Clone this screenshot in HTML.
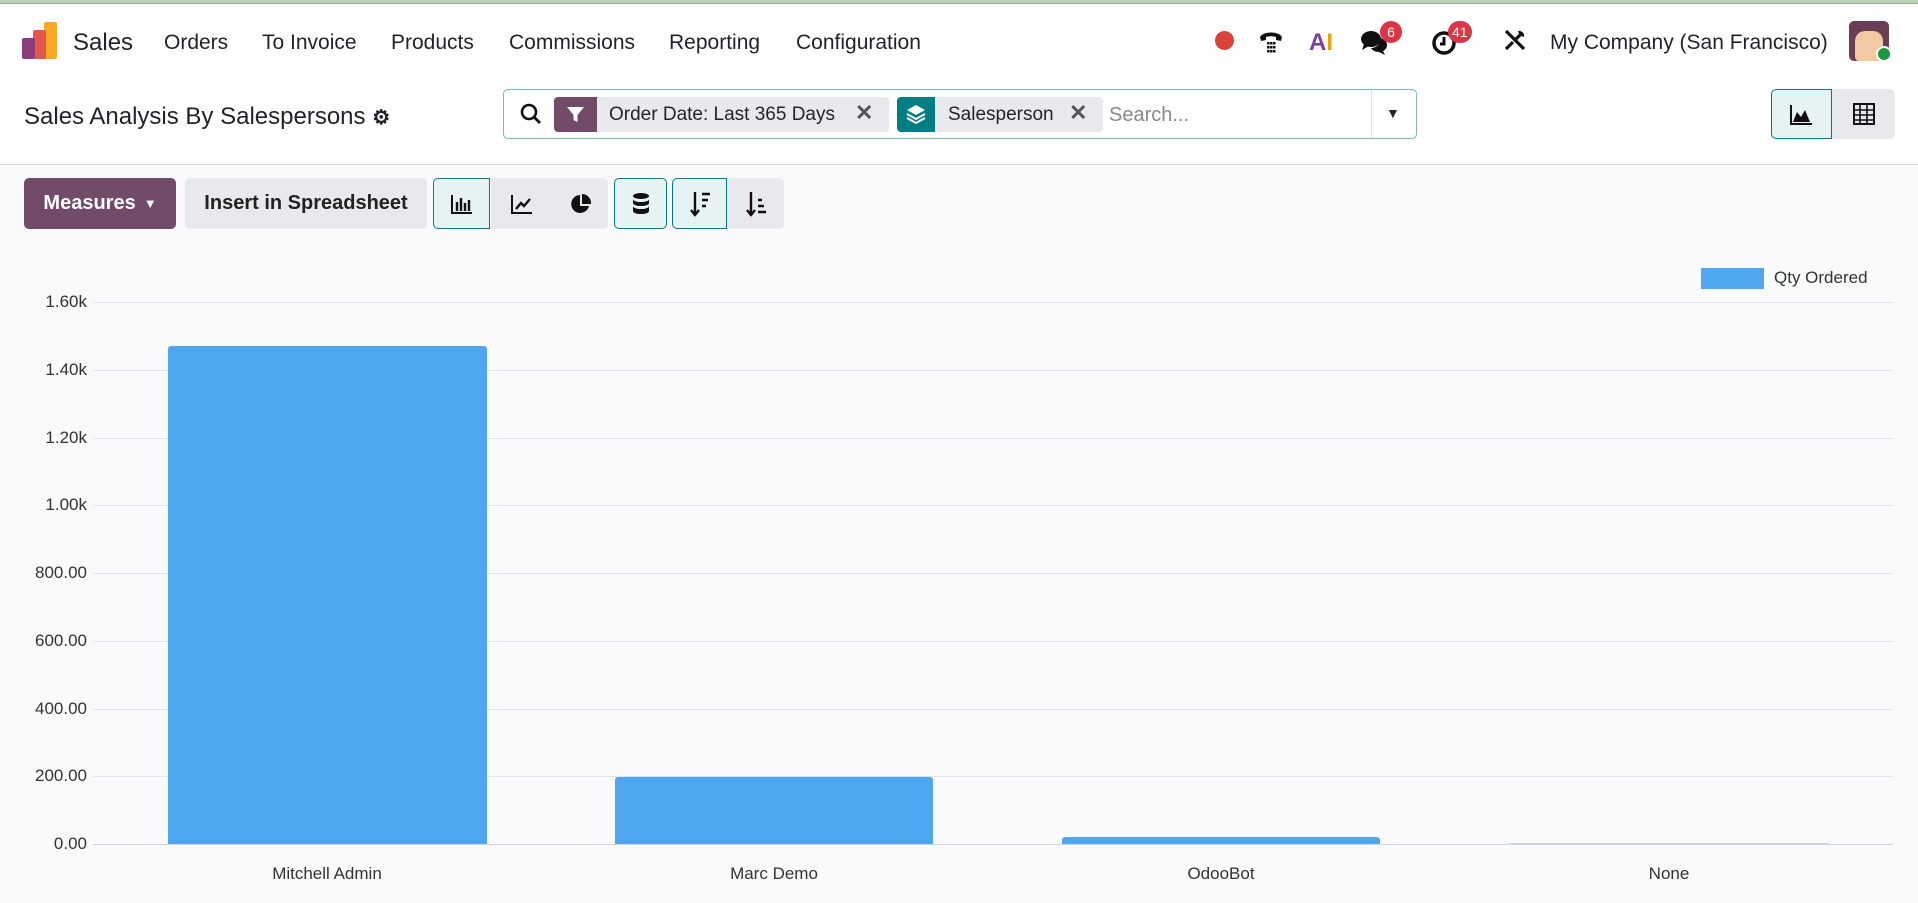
<!DOCTYPE html>
<html><head><meta charset="utf-8"><style>
*{box-sizing:border-box;margin:0;padding:0}
body{width:1918px;height:903px;overflow:hidden;font-family:"Liberation Sans",sans-serif;color:#212529;background:#f9fafb;position:relative}
.a{position:absolute}
.top{left:0;top:0;width:1918px;height:165px;background:#fff;border-bottom:1px solid #d8dadd}
.gl{left:0;top:0;width:1918px;height:4px;background:#b9d3b9;border-bottom:1px solid #8fa88f}
.nav{top:31px;font-size:21px;color:#1f2328}
.btn{background:#e7e9ed;border-radius:5px;height:51px;top:178px;display:flex;align-items:center;justify-content:center}
.act{background:#e6f2f3;border:1px solid #017e84}
.grid{left:93px;width:1800px;height:1px;background:#e1e3e6}
.yl{left:20px;width:67px;text-align:right;font-size:17px;color:#333}
.xl{font-size:17px;color:#333;text-align:center;width:300px;top:864px}
.bar{background:#4fa7f2;border-top-left-radius:3px;border-top-right-radius:3px}
.badge{background:#dc3545;color:#fff;font-size:14px;border-radius:11px;height:22px;min-width:22px;text-align:center;line-height:22px;padding:0 4px;top:21px}
</style></head><body>
<div class="a top"></div>
<div class="a gl"></div>
<svg class="a" style="left:22px;top:22px" width="36" height="38" viewBox="0 0 36 38"><rect x="22" y="0" width="13" height="37" fill="#f9a825" rx="2"/><rect x="11" y="8" width="13" height="29" fill="#e4574f" rx="2"/><rect x="0" y="16" width="13" height="21" fill="#8c3d7a" rx="2"/></svg>
<div class="a nav" style="left:73px;top:29px;font-size:24px">Sales</div>
<div class="a nav" style="left:164px">Orders</div>
<div class="a nav" style="left:262px">To Invoice</div>
<div class="a nav" style="left:391px">Products</div>
<div class="a nav" style="left:509px">Commissions</div>
<div class="a nav" style="left:669px">Reporting</div>
<div class="a nav" style="left:796px">Configuration</div>
<div class="a" style="left:1215px;top:31px;width:19px;height:19px;border-radius:50%;background:#d9443a"></div>
<svg class="a" style="left:1258px;top:28px" width="26" height="26" viewBox="0 0 26 26"><path d="M2 9c3-6 19-6 22 0l-1 4-5-1v-3c-3-1-7-1-10 0v3l-5 1z" fill="#111"/><g fill="#111"><rect x="9" y="14" width="2.5" height="2.5"/><rect x="12" y="14" width="2.5" height="2.5"/><rect x="15" y="14" width="2.5" height="2.5"/><rect x="9" y="18" width="2.5" height="2.5"/><rect x="12" y="18" width="2.5" height="2.5"/><rect x="15" y="18" width="2.5" height="2.5"/><rect x="9" y="22" width="2.5" height="2.5"/><rect x="12" y="22" width="2.5" height="2.5"/><rect x="15" y="22" width="2.5" height="2.5"/></g></svg>
<div class="a" style="left:1309px;top:29px;font-size:24px;font-weight:bold;color:#7b3fa0">A<span style="color:#f0a000">I</span></div>
<svg class="a" style="left:1360px;top:29px" width="28" height="26" viewBox="0 0 28 26"><ellipse cx="11" cy="10" rx="10" ry="8" fill="#111"/><path d="M4 15l-2 6 7-4z" fill="#111"/><path d="M20 9c5 1 7 4 7 7s-2 5-4 6l2 4-6-3c-4 0-7-2-8-4 5 0 10-4 9-10z" fill="#111"/></svg>
<div class="a badge" style="left:1380px">6</div>
<svg class="a" style="left:1431px;top:30px" width="26" height="26" viewBox="0 0 26 26"><circle cx="13" cy="13" r="10" stroke="#111" stroke-width="3.5" fill="none"/><path d="M13 7v7h-4" stroke="#111" stroke-width="3" fill="none"/></svg>
<div class="a badge" style="left:1448px">41</div>
<svg class="a" style="left:1503px;top:28px" width="24" height="24" viewBox="0 0 24 24"><path d="M3 3l18 18M3 21l7-7" stroke="#111" stroke-width="3.2"/><path d="M15 3a5 5 0 0 1 6 6l-3-1-2-2z" fill="#111"/><path d="M13 11l4-4" stroke="#111" stroke-width="3.2"/></svg>
<div class="a nav" style="left:1550px">My Company (San Francisco)</div>
<div class="a" style="left:1849px;top:21px;width:40px;height:40px;border-radius:5px;background:#6a3e55;overflow:hidden"><div style="margin:10px 6px;width:28px;height:30px;background:#f2c9a0;border-radius:10px 10px 4px 4px"></div></div>
<div class="a" style="left:1876px;top:46px;width:16px;height:16px;border-radius:50%;background:#1a9a3a;border:2px solid #fff"></div>
<div class="a" style="left:24px;top:103px;font-size:24px;color:#1f2328">Sales Analysis By Salespersons <span style="font-size:20px;font-weight:bold">⚙</span></div>
<div class="a" style="left:503px;top:89px;width:914px;height:50px;border:1px solid #7fb6b9;border-radius:5px;background:#fff"></div>
<svg class="a" style="left:519px;top:102px" width="24" height="24" viewBox="0 0 24 24"><circle cx="10" cy="10" r="7" stroke="#111" stroke-width="2.6" fill="none"/><line x1="15" y1="15" x2="21" y2="21" stroke="#111" stroke-width="2.8"/></svg>
<div class="a" style="left:554px;top:97px;width:335px;height:35px;background:#e7e9ed;border-radius:4px"></div>
<div class="a" style="left:554px;top:97px;width:43px;height:35px;background:#714b67;border-radius:4px 0 0 4px"></div>
<svg class="a" style="left:566px;top:105px" width="19" height="19" viewBox="0 0 19 19"><path d="M1 2h17l-6.5 8v7l-4-2v-5z" fill="#fff"/></svg>
<div class="a" style="left:609px;top:104px;font-size:19px">Order Date: Last 365 Days</div>
<div class="a" style="left:855px;top:100px;font-size:22px;color:#555;font-weight:bold">✕</div>
<div class="a" style="left:897px;top:97px;width:206px;height:35px;background:#e7e9ed;border-radius:4px"></div>
<div class="a" style="left:897px;top:97px;width:38px;height:35px;background:#017e84;border-radius:4px 0 0 4px"></div>
<svg class="a" style="left:905px;top:103px" width="22" height="22" viewBox="0 0 22 22"><path d="M11 2l9 5-9 5-9-5z" fill="#fff"/><path d="M2 11l9 5 9-5M2 15l9 5 9-5" stroke="#fff" stroke-width="2" fill="none"/></svg>
<div class="a" style="left:948px;top:104px;font-size:19px">Salesperson</div>
<div class="a" style="left:1069px;top:100px;font-size:22px;color:#555;font-weight:bold">✕</div>
<div class="a" style="left:1109px;top:104px;font-size:20px;color:#888">Search...</div>
<div class="a" style="left:1371px;top:90px;width:1px;height:48px;background:#dee2e6"></div>
<div class="a" style="left:1386px;top:105px;font-size:14px">▼</div>
<div class="a act" style="left:1771px;top:89px;width:61px;height:50px;border-radius:5px 0 0 5px"></div>
<svg class="a" style="left:1789px;top:104px" width="24" height="22" viewBox="0 0 24 22"><path d="M2 1v19h21" stroke="#111" stroke-width="2" fill="none"/><path d="M4 18l4-10 4 5 4-7 5 12z" fill="#111"/></svg>
<div class="a" style="left:1832px;top:89px;width:63px;height:50px;background:#e7e9ed;border-radius:0 5px 5px 0"></div>
<svg class="a" style="left:1853px;top:103px" width="22" height="22" viewBox="0 0 22 22"><rect x="1" y="1" width="20" height="20" stroke="#111" stroke-width="2" fill="none"/><path d="M1 7h20M1 12h20M1 17h20M7 1v20M14 1v20" stroke="#111" stroke-width="1.6"/></svg>
<div class="a btn" style="left:24px;width:152px;background:#714b67;color:#fff;font-size:20px;font-weight:bold">Measures <span style="font-size:13px;margin-left:8px">▼</span></div>
<div class="a btn" style="left:185px;width:242px;font-size:20px;font-weight:bold;color:#222">Insert in Spreadsheet</div>
<div class="a btn act" style="left:433px;width:57px;border-radius:5px 0 0 5px"><svg width="22" height="20" viewBox="0 0 22 20"><path d="M1 1v18h20" stroke="#111" stroke-width="2" fill="none"/><path d="M6 8v9M10 4v13M14 9v8M18 6v11" stroke="#111" stroke-width="2.4"/></svg></div>
<div class="a btn" style="left:491px;width:62px;border-radius:0"><svg width="22" height="20" viewBox="0 0 22 20"><path d="M1 1v18h20" stroke="#111" stroke-width="2" fill="none"/><path d="M5 15l5-6 3 3 6-7" stroke="#111" stroke-width="2.4" fill="none"/></svg></div>
<div class="a btn" style="left:553px;width:55px;border-radius:0 5px 5px 0"><svg width="22" height="22" viewBox="0 0 22 22"><path d="M10 2a9 9 0 1 0 9 11h-9z" fill="#111"/><path d="M12 1v10h9a9 9 0 0 0-9-10z" fill="#111"/></svg></div>
<div class="a btn act" style="left:614px;width:53px"><svg width="20" height="24" viewBox="0 0 20 24"><ellipse cx="10" cy="4" rx="8" ry="3" fill="#111"/><path d="M2 7c0 4 16 4 16 0v4c0 4-16 4-16 0zM2 14c0 4 16 4 16 0v5c0 4-16 4-16 0z" fill="#111"/></svg></div>
<div class="a btn act" style="left:672px;width:55px;border-radius:5px 0 0 5px"><svg width="22" height="26" viewBox="0 0 22 26"><path d="M6 1v22M2 19l4 5 4-5" stroke="#111" stroke-width="2.4" fill="none"/><path d="M13 3h8M13 9h6M13 15h4" stroke="#111" stroke-width="2.4"/></svg></div>
<div class="a btn" style="left:727px;width:57px;border-radius:0 5px 5px 0"><svg width="22" height="26" viewBox="0 0 22 26"><path d="M6 1v22M2 19l4 5 4-5" stroke="#111" stroke-width="2.4" fill="none"/><path d="M13 9h4M13 15h6M13 21h8" stroke="#111" stroke-width="2.4"/></svg></div>
<div class="a grid" style="top:302px"></div><div class="a yl" style="top:292px">1.60k</div>
<div class="a grid" style="top:370px"></div><div class="a yl" style="top:360px">1.40k</div>
<div class="a grid" style="top:438px"></div><div class="a yl" style="top:428px">1.20k</div>
<div class="a grid" style="top:505px"></div><div class="a yl" style="top:495px">1.00k</div>
<div class="a grid" style="top:573px"></div><div class="a yl" style="top:563px">800.00</div>
<div class="a grid" style="top:641px"></div><div class="a yl" style="top:631px">600.00</div>
<div class="a grid" style="top:709px"></div><div class="a yl" style="top:699px">400.00</div>
<div class="a grid" style="top:776px"></div><div class="a yl" style="top:766px">200.00</div>
<div class="a grid" style="top:844px;background:#cfd2d6"></div><div class="a yl" style="top:834px">0.00</div>
<div class="a bar" style="left:168px;top:346px;width:319px;height:498px"></div>
<div class="a bar" style="left:615px;top:777px;width:318px;height:67px"></div>
<div class="a bar" style="left:1062px;top:837px;width:318px;height:7px"></div>
<div class="a" style="left:1509px;top:843px;width:320px;height:1px;background:#bcd6ee"></div>
<div class="a xl" style="left:177px">Mitchell Admin</div>
<div class="a xl" style="left:624px">Marc Demo</div>
<div class="a xl" style="left:1071px">OdooBot</div>
<div class="a xl" style="left:1519px">None</div>
<div class="a" style="left:1701px;top:268px;width:63px;height:21px;background:#4fa7f2"></div>
<div class="a" style="left:1774px;top:268px;font-size:17px;color:#333">Qty Ordered</div>
</body></html>
